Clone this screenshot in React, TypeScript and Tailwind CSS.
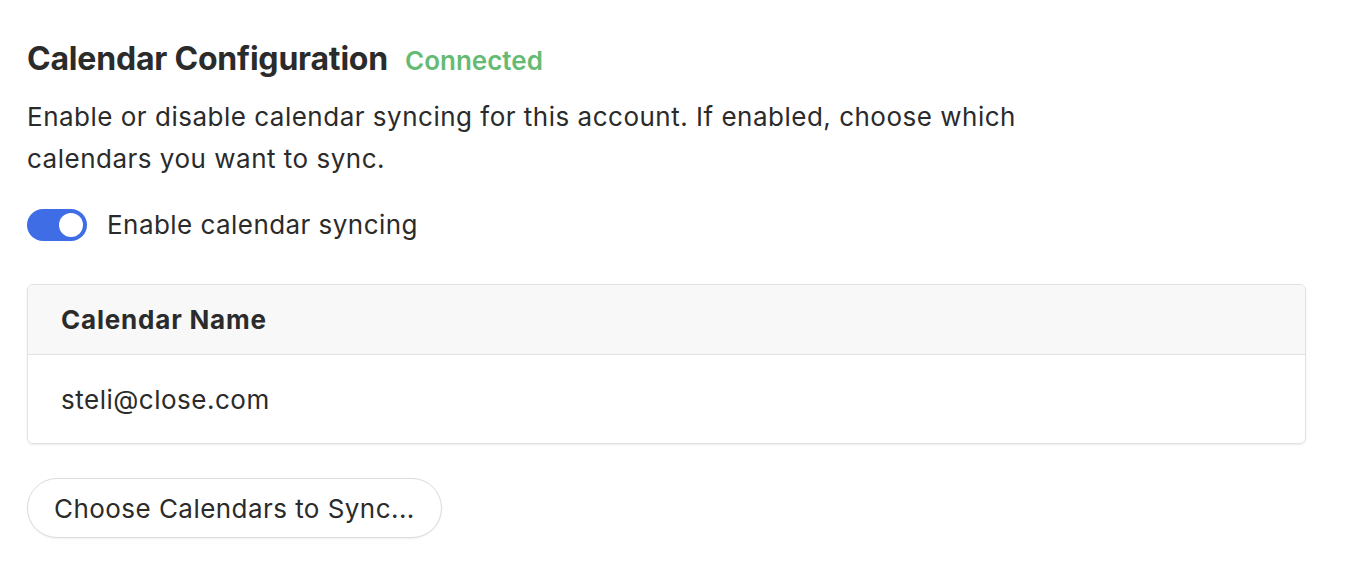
import React from "react";

const App: React.FC = () => (
  <div
    className="w-[1352px] h-[564px] bg-white text-[#2b2b2b] px-[27px] pt-[39px]"
    style={{ fontFamily: "Inter, 'Noto Sans', sans-serif" }}
  >
    {/* Header */}
    <div className="flex items-baseline gap-[17px]">
      <h2 className="text-[32px] font-bold leading-[40px] tracking-[-0.2px]">Calendar Configuration</h2>
      <span className="text-[26px] font-semibold text-[#66bb74]">Connected</span>
    </div>

    <p className="mt-[16px] w-[1030px] text-[26px] leading-[42px] tracking-[0.5px]">
      Enable or disable calendar syncing for this account. If enabled, choose which calendars you want to sync.
    </p>

    {/* Toggle */}
    <div className="mt-[29px] flex items-center gap-[20px]">
      <button className="relative w-[60px] h-[32px] rounded-full bg-[#3e6de6]">
        <span className="absolute right-[4px] top-[4px] w-[24px] h-[24px] rounded-full bg-white" />
      </button>
      <span className="text-[26px] leading-[32px] tracking-[0.45px]">Enable calendar syncing</span>
    </div>

    {/* Table */}
    <div className="mt-[43px] w-[1279px] rounded-[6px] border border-[#e2e2e2] shadow-[0_1px_2px_rgba(0,0,0,0.08)] overflow-hidden">
      <div className="h-[70px] bg-[#f8f8f8] border-b border-[#e2e2e2] flex items-center px-[33px]">
        <span className="text-[26px] font-bold tracking-[0.8px]">Calendar Name</span>
      </div>
      <div className="h-[88px] flex items-center px-[33px]">
        <span className="text-[26px] tracking-[0.5px]">steli@close.com</span>
      </div>
    </div>

    {/* Button */}
    <button className="mt-[34px] h-[60px] px-[26px] rounded-full border border-[#dcdcdc] bg-white shadow-[0_1px_2px_rgba(0,0,0,0.06)] text-[26px] tracking-[0.45px]">
      Choose Calendars to Sync...
    </button>
  </div>
);

export default App;
